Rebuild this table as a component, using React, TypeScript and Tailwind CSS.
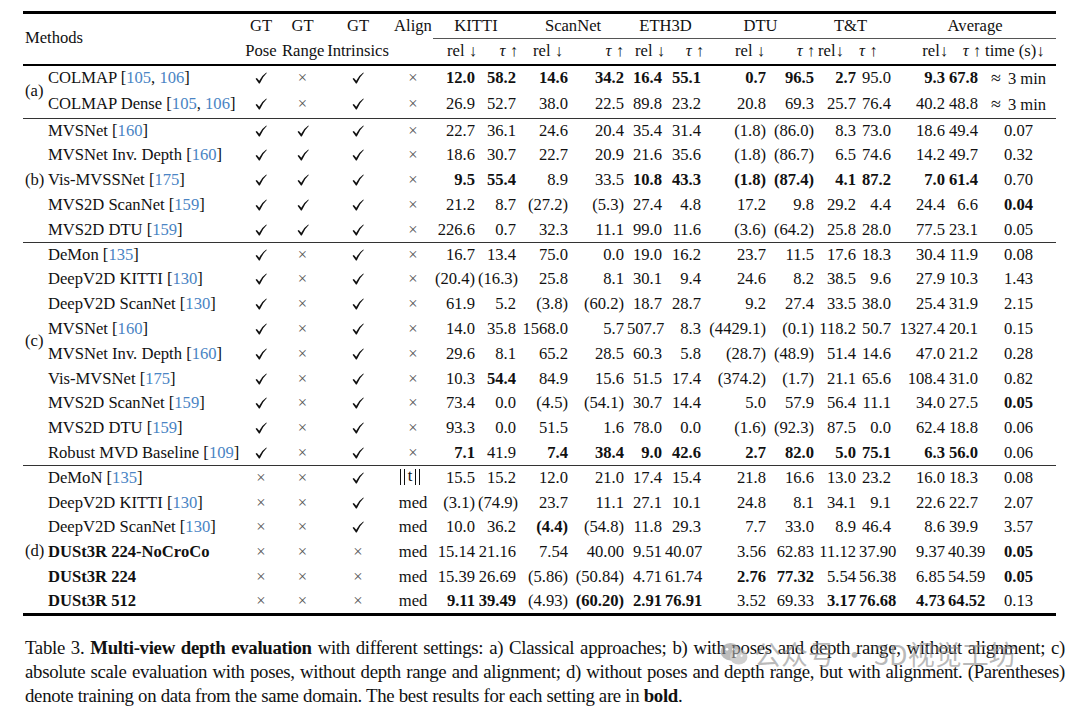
import React from "react";

type Row = { name: string; bold?: boolean; flags: string[]; v: string[] };
type Group = { label: string; rows: Row[]; labelCls: string; rowCls: string };

const Y = "y";
const N = "n";

const groups: Group[] = [
  {
    label: "(a)",
    labelCls: "",
    rowCls: "h-[27px]",
    rows: [
      { name: "COLMAP [105, 106]", flags: [Y, N, Y, N], v: ["**12.0", "**58.2", "**14.6", "**34.2", "**16.4", "**55.1", "**0.7", "**96.5", "**2.7", "95.0", "**9.3", "**67.8", "≈ 3 min"] },
      { name: "COLMAP Dense [105, 106]", flags: [Y, N, Y, N], v: ["26.9", "52.7", "38.0", "22.5", "89.8", "23.2", "20.8", "69.3", "25.7", "76.4", "40.2", "48.8", "≈ 3 min"] },
    ],
  },
  {
    label: "(b)",
    labelCls: "",
    rowCls: "h-[24.8px]",
    rows: [
      { name: "MVSNet [160]", flags: [Y, Y, Y, N], v: ["22.7", "36.1", "24.6", "20.4", "35.4", "31.4", "(1.8)", "(86.0)", "8.3", "73.0", "18.6", "49.4", "0.07"] },
      { name: "MVSNet Inv. Depth [160]", flags: [Y, Y, Y, N], v: ["18.6", "30.7", "22.7", "20.9", "21.6", "35.6", "(1.8)", "(86.7)", "6.5", "74.6", "14.2", "49.7", "0.32"] },
      { name: "Vis-MVSSNet [175]", flags: [Y, Y, Y, N], v: ["**9.5", "**55.4", "8.9", "33.5", "**10.8", "**43.3", "**(1.8)", "**(87.4)", "**4.1", "**87.2", "**7.0", "**61.4", "0.70"] },
      { name: "MVS2D ScanNet [159]", flags: [Y, Y, Y, N], v: ["21.2", "8.7", "(27.2)", "(5.3)", "27.4", "4.8", "17.2", "9.8", "29.2", "4.4", "24.4", "6.6", "**0.04"] },
      { name: "MVS2D DTU [159]", flags: [Y, Y, Y, N], v: ["226.6", "0.7", "32.3", "11.1", "99.0", "11.6", "(3.6)", "(64.2)", "25.8", "28.0", "77.5", "23.1", "0.05"] },
    ],
  },
  {
    label: "(c)",
    labelCls: "pb-[26px]",
    rowCls: "h-[24.8px]",
    rows: [
      { name: "DeMon [135]", flags: [Y, N, Y, N], v: ["16.7", "13.4", "75.0", "0.0", "19.0", "16.2", "23.7", "11.5", "17.6", "18.3", "30.4", "11.9", "0.08"] },
      { name: "DeepV2D KITTI [130]", flags: [Y, N, Y, N], v: ["(20.4)", "(16.3)", "25.8", "8.1", "30.1", "9.4", "24.6", "8.2", "38.5", "9.6", "27.9", "10.3", "1.43"] },
      { name: "DeepV2D ScanNet [130]", flags: [Y, N, Y, N], v: ["61.9", "5.2", "(3.8)", "(60.2)", "18.7", "28.7", "9.2", "27.4", "33.5", "38.0", "25.4", "31.9", "2.15"] },
      { name: "MVSNet [160]", flags: [Y, N, Y, N], v: ["14.0", "35.8", "1568.0", "5.7", "507.7", "8.3", "(4429.1)", "(0.1)", "118.2", "50.7", "1327.4", "20.1", "0.15"] },
      { name: "MVSNet Inv. Depth [160]", flags: [Y, N, Y, N], v: ["29.6", "8.1", "65.2", "28.5", "60.3", "5.8", "(28.7)", "(48.9)", "51.4", "14.6", "47.0", "21.2", "0.28"] },
      { name: "Vis-MVSNet [175]", flags: [Y, N, Y, N], v: ["10.3", "**54.4", "84.9", "15.6", "51.5", "17.4", "(374.2)", "(1.7)", "21.1", "65.6", "108.4", "31.0", "0.82"] },
      { name: "MVS2D ScanNet [159]", flags: [Y, N, Y, N], v: ["73.4", "0.0", "(4.5)", "(54.1)", "30.7", "14.4", "5.0", "57.9", "56.4", "11.1", "34.0", "27.5", "**0.05"] },
      { name: "MVS2D DTU [159]", flags: [Y, N, Y, N], v: ["93.3", "0.0", "51.5", "1.6", "78.0", "0.0", "(1.6)", "(92.3)", "87.5", "0.0", "62.4", "18.8", "0.06"] },
      { name: "Robust MVD Baseline [109]", flags: [Y, N, Y, N], v: ["**7.1", "41.9", "**7.4", "**38.4", "**9.0", "**42.6", "**2.7", "**82.0", "**5.0", "**75.1", "**6.3", "**56.0", "0.06"] },
    ],
  },
  {
    label: "(d)",
    labelCls: "pt-[24px]",
    rowCls: "h-[24.8px]",
    rows: [
      { name: "DeMoN [135]", flags: [N, N, Y, "norm"], v: ["15.5", "15.2", "12.0", "21.0", "17.4", "15.4", "21.8", "16.6", "13.0", "23.2", "16.0", "18.3", "0.08"] },
      { name: "DeepV2D KITTI [130]", flags: [N, N, Y, "med"], v: ["(3.1)", "(74.9)", "23.7", "11.1", "27.1", "10.1", "24.8", "8.1", "34.1", "9.1", "22.6", "22.7", "2.07"] },
      { name: "DeepV2D ScanNet [130]", flags: [N, N, Y, "med"], v: ["10.0", "36.2", "**(4.4)", "(54.8)", "11.8", "29.3", "7.7", "33.0", "8.9", "46.4", "8.6", "39.9", "3.57"] },
      { name: "DUSt3R 224-NoCroCo", bold: true, flags: [N, N, N, "med"], v: ["15.14", "21.16", "7.54", "40.00", "9.51", "40.07", "3.56", "62.83", "11.12", "37.90", "9.37", "40.39", "**0.05"] },
      { name: "DUSt3R 224", bold: true, flags: [N, N, N, "med"], v: ["15.39", "26.69", "(5.86)", "(50.84)", "4.71", "61.74", "**2.76", "**77.32", "5.54", "56.38", "6.85", "54.59", "**0.05"] },
      { name: "DUSt3R 512", bold: true, flags: [N, N, N, "med"], v: ["**9.11", "**39.49", "(4.93)", "**(60.20)", "**2.91", "**76.91", "3.52", "69.33", "**3.17", "**76.68", "**4.73", "**64.52", "0.13"] },
    ],
  },
];

function Check() {
  return (
    <svg width="12" height="12" viewBox="0 0 11 11" className="inline-block align-[-1px]">
      <path d="M0.5 6.3 L1.7 5.4 L3.9 8.0 Q6.2 3.3 10.4 0.5 L10.8 1.0 Q7.0 4.4 4.4 10.5 L3.6 10.5 Z" fill="#111" />
    </svg>
  );
}

function Bars() {
  return <span className="inline-block w-[5px] h-[16px] border-x border-[#111] align-[-3px]" />;
}

function Flag({ f }: { f: string }) {
  if (f === Y) return <Check />;
  if (f === N) return <span className="text-[#555]">×</span>;
  if (f === "norm")
    return (
      <span className="inline-flex items-center gap-[3px] -ml-[6px]">
        <Bars />
        <span>t</span>
        <Bars />
      </span>
    );
  return <span>{f}</span>;
}

function Name({ s, bold }: { s: string; bold?: boolean }) {
  const i = s.indexOf("[");
  if (i < 0) return <span className={bold ? "font-bold" : ""}>{s}</span>;
  const pre = s.slice(0, i);
  const refs = s.slice(i + 1, s.length - 1).split(", ");
  return (
    <span className={bold ? "font-bold" : ""}>
      {pre}[
      {refs.map((r, k) => (
        <React.Fragment key={k}>
          {k > 0 ? ", " : ""}
          <span className="text-[#4a84c4]">{r}</span>
        </React.Fragment>
      ))}
      ]
    </span>
  );
}

function Val({ v }: { v: string }) {
  if (v === "≈ 3 min")
    return (
      <span>
        <span className="text-[18px] mr-[7px]">≈</span>3 min
      </span>
    );
  if (v.startsWith("**")) return <span className="font-bold">{v.slice(2)}</span>;
  return <span>{v}</span>;
}

const tau = <span className="italic">τ</span>;

export default function App() {
  return (
    <div className="relative w-[1080px] h-[708px] bg-white text-[#111] [font-family:'Liberation_Serif',serif] overflow-hidden">
      <div className="pt-[11px] pl-[23px]">
        <table className="table-fixed border-collapse w-[1033px] text-[16.6px] leading-none">
          <colgroup>
            <col className="w-[25px]" />
            <col className="w-[192px]" />
            <col className="w-[42px]" />
            <col className="w-[41px]" />
            <col className="w-[70px]" />
            <col className="w-[40px]" />
            <col className="w-[45px]" />
            <col className="w-[41px]" />
            <col className="w-[52px]" />
            <col className="w-[56px]" />
            <col className="w-[38px]" />
            <col className="w-[39px]" />
            <col className="w-[65px]" />
            <col className="w-[48px]" />
            <col className="w-[42px]" />
            <col className="w-[35px]" />
            <col className="w-[54px]" />
            <col className="w-[33px]" />
            <col className="w-[75px]" />
          </colgroup>
          <thead>
            <tr className="h-[26px] border-t-[3px] border-black">
              <th colSpan={2} rowSpan={2} className="text-left font-normal pl-[2px]">Methods</th>
              <th className="font-normal">GT</th>
              <th className="font-normal">GT</th>
              <th className="font-normal">GT</th>
              <th className="font-normal">Align</th>
              <th colSpan={2} className="font-normal border-b border-[#555]">KITTI</th>
              <th colSpan={2} className="font-normal border-b border-[#555]">ScanNet</th>
              <th colSpan={2} className="font-normal border-b border-[#555]">ETH3D</th>
              <th colSpan={2} className="font-normal border-b border-[#555]">DTU</th>
              <th colSpan={2} className="font-normal border-b border-[#555] pr-[10px]">T&amp;T</th>
              <th colSpan={3} className="font-normal border-b border-[#555]">Average</th>
            </tr>
            <tr className="h-[26px] border-b-[2.5px] border-black">
              <th className="font-normal">Pose</th>
              <th className="font-normal">Range</th>
              <th className="font-normal">Intrinsics</th>
              <th className="font-normal"></th>
              <th className="font-normal text-right pr-[1px] whitespace-nowrap">rel ↓</th>
              <th className="font-normal text-right pr-[1px] whitespace-nowrap">{tau} ↑</th>
              <th className="font-normal text-right pr-[8px] whitespace-nowrap">rel ↓</th>
              <th className="font-normal text-right pr-[3px] whitespace-nowrap">{tau} ↑</th>
              <th className="font-normal text-right pr-[0px] whitespace-nowrap">rel ↓</th>
              <th className="font-normal text-right pr-[0px] whitespace-nowrap">{tau} ↑</th>
              <th className="font-normal text-right pr-[4px] whitespace-nowrap">rel ↓</th>
              <th className="font-normal text-right pr-[2px] whitespace-nowrap">{tau} ↑</th>
              <th className="font-normal text-left pl-[1px] whitespace-nowrap">rel↓</th>
              <th className="font-normal text-left pl-[0px] whitespace-nowrap">{tau} ↑</th>
              <th className="font-normal text-right pr-[0px] whitespace-nowrap">rel↓</th>
              <th className="font-normal text-right pr-[0px] whitespace-nowrap">{tau} ↑</th>
              <th className="font-normal text-left pl-[4px] whitespace-nowrap">time (s)↓</th>
            </tr>
          </thead>
          {groups.map((g, gi) => (
            <tbody key={gi} className={gi === 0 ? "" : "border-t border-[#333]"}>
              {g.rows.map((r, ri) => (
                <tr key={ri} className={g.rowCls}>
                  {ri === 0 && (
                    <td rowSpan={g.rows.length} className={`text-left pl-[2px] align-middle ${g.labelCls}`}>
                      {g.label}
                    </td>
                  )}
                  <td className="text-left whitespace-nowrap">
                    <Name s={r.name} bold={r.bold} />
                  </td>
                  {r.flags.map((f, fi) => (
                    <td key={fi} className="text-center whitespace-nowrap">
                      <Flag f={f} />
                    </td>
                  ))}
                  {r.v.map((v, vi) =>
                    vi === 12 ? (
                      <td key={vi} className="text-center whitespace-nowrap">
                        <Val v={v} />
                      </td>
                    ) : (
                      <td key={vi} className="text-right pr-[3px] whitespace-nowrap">
                        <Val v={v} />
                      </td>
                    )
                  )}
                </tr>
              ))}
            </tbody>
          ))}
          <tfoot>
            <tr className="border-t-[3px] border-black">
              <td colSpan={19}></td>
            </tr>
          </tfoot>
        </table>
      </div>

      <div className="ml-[25px] mt-[20px] w-[1040px] text-[18.8px] leading-[24px] tracking-[-0.3px] text-justify">
        <div className="[text-align-last:justify] whitespace-nowrap">
          Table 3. <b>Multi-view depth evaluation</b> with different settings: a) Classical approaches; b) with poses and depth range, without alignment; c)
        </div>
        <div className="[text-align-last:justify] whitespace-nowrap">
          absolute scale evaluation with poses, without depth range and alignment; d) without poses and depth range, but with alignment. (Parentheses)
        </div>
        <div>
          denote training on data from the same domain. The best results for each setting are in <b>bold</b>.
        </div>
      </div>

      <div className="absolute left-[720px] top-[640px] flex items-center gap-[6px] text-[#8c8c8c]/60 text-[27px] leading-none [font-family:'Noto_Sans_CJK_SC',sans-serif]">
        <svg width="28" height="26" viewBox="0 0 24 22" className="opacity-60">
          <ellipse cx="9" cy="9" rx="8.5" ry="7.5" fill="#909090" />
          <ellipse cx="16" cy="13.5" rx="7.5" ry="6.5" fill="#b0b0b0" />
          <circle cx="6" cy="7" r="1.2" fill="#fff" />
          <circle cx="11.5" cy="7" r="1.2" fill="#fff" />
          <circle cx="13.5" cy="12.5" r="1" fill="#fff" />
          <circle cx="18.5" cy="12.5" r="1" fill="#fff" />
        </svg>
        <span>公众号 · 3D视觉工坊</span>
      </div>
    </div>
  );
}
